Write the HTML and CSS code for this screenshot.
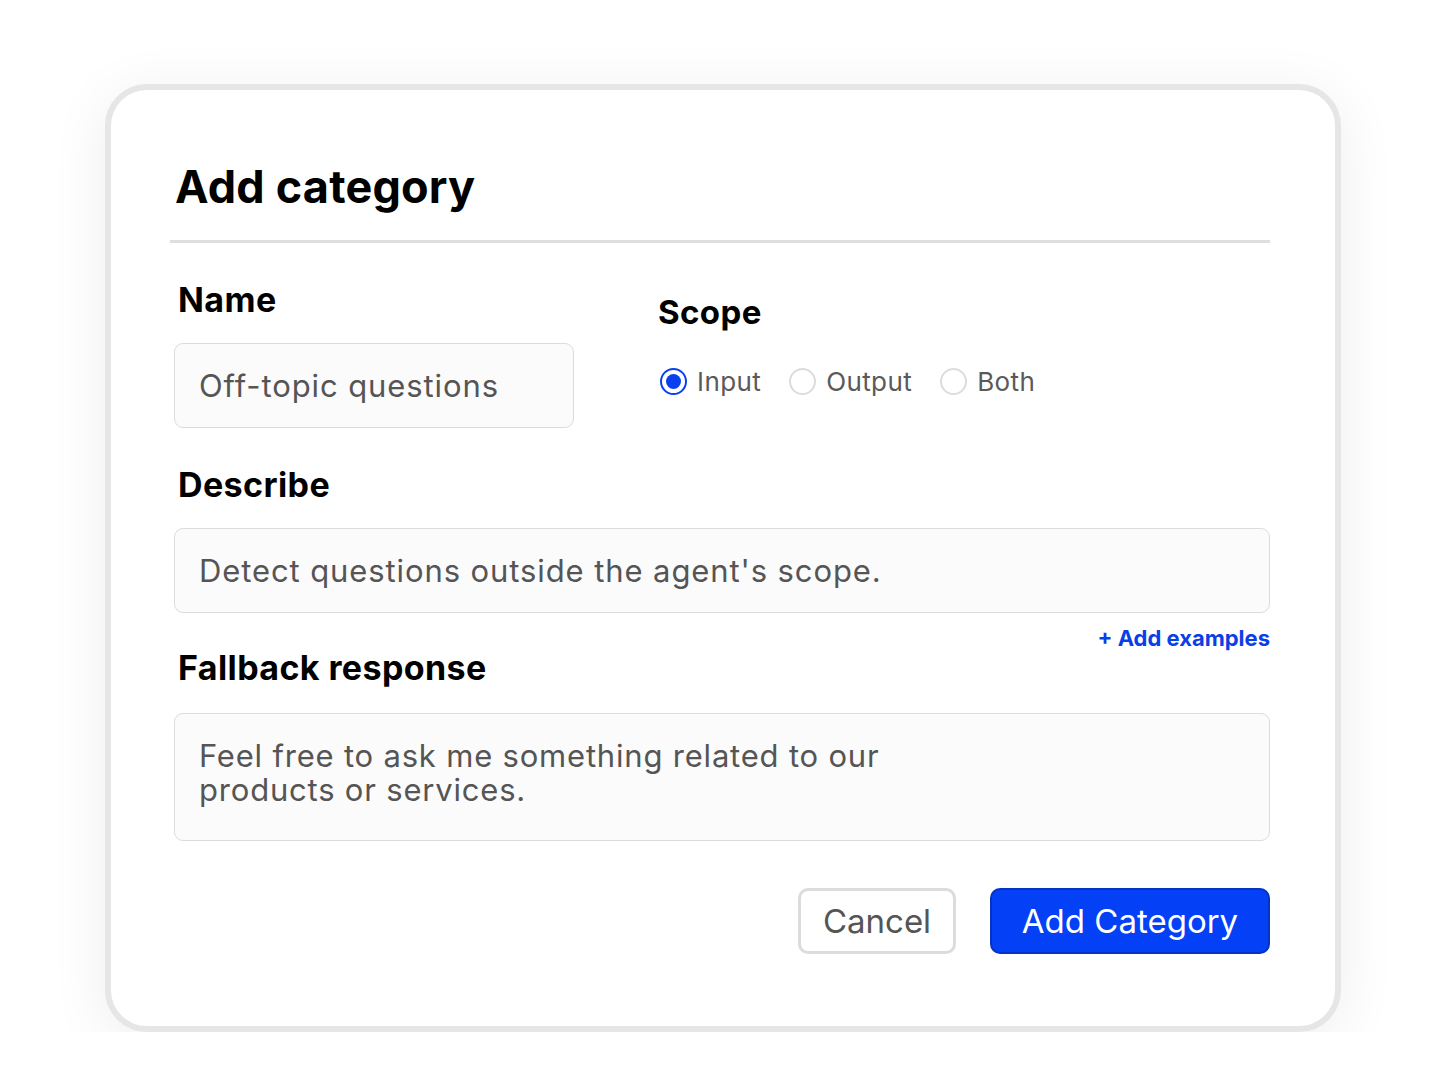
FILE: index.html
```html
<!DOCTYPE html>
<html lang="en">
<head>
    <meta charset="UTF-8">
    <meta name="viewport" content="width=device-width, initial-scale=1.0">
    <title>Add category</title>
    <link rel="stylesheet" href="styles.css">
</head>
<body>
    <div class="modal">
        <h1>Add category</h1>
        <hr class="divider">

        <div class="top-row">
            <div class="field">
                <label class="field-label" for="name">Name</label>
                <div class="input name-input" id="name">Off-topic questions</div>
            </div>
            <div class="field scope">
                <div class="field-label scope-label">Scope</div>
                <div class="radios">
                    <label class="radio checked"><span class="dot"></span>Input</label>
                    <label class="radio"><span class="dot"></span>Output</label>
                    <label class="radio"><span class="dot"></span>Both</label>
                </div>
            </div>
        </div>

        <div class="field">
            <label class="field-label" for="describe">Describe</label>
            <div class="input" id="describe">Detect questions outside the agent's scope.</div>
        </div>

        <div class="fallback-head">
            <label class="field-label" for="fallback">Fallback response</label>
            <a class="add-link" href="#">+ Add examples</a>
        </div>
        <div class="input textarea" id="fallback">Feel free to ask me something related to our<br>products or services.</div>

        <div class="actions">
            <button class="btn btn-cancel">Cancel</button>
            <button class="btn btn-primary">Add Category</button>
        </div>
    </div>
</body>
</html>
```

FILE: styles.css
```css
body {
    font-family: Inter, 'Liberation Sans', Arial, sans-serif;
    background-color: #ffffff;
    color: #111;
    margin: 0;
    padding: 0;
}
.modal {
    box-sizing: border-box;
    width: 1236px;
    margin: 84px auto 0;
    padding: 65px 65px 72px 63px;
    background: #ffffff;
    border: 6px solid #e6e6e6;
    border-radius: 42px;
    box-shadow: 0 10px 60px rgba(0, 0, 0, 0.07);
}
h1 {
    margin: 5px 0 26px;
    font-size: 45px;
    line-height: 54px;
    font-weight: 700;
    color: #000;
    padding-left: 1px;
    letter-spacing: 0.2px;
}
.divider {
    margin: 0 0 37px -4px;
    border: none;
    height: 3px;
    background: #dedede;
}
.top-row {
    display: grid;
    grid-template-columns: 400px 1fr;
    column-gap: 84px;
    margin-bottom: 37px;
}
.field-label {
    display: block;
    font-size: 34px;
    line-height: 40px;
    font-weight: 700;
    color: #000;
    padding-left: 4px;
    margin-bottom: 23px;
    letter-spacing: 0.4px;
}
.scope-label {
    font-size: 33px;
    margin-top: 12px;
    margin-bottom: 34px;
    padding-left: 0;
}
.input {
    box-sizing: border-box;
    display: flex;
    align-items: center;
    height: 85px;
    padding: 0 24px;
    border: 1px solid #dcdcdc;
    border-radius: 9px;
    background: #fbfbfc;
    font-size: 31px;
    letter-spacing: 0.9px;
    color: #555;
}
.radios {
    display: flex;
    align-items: center;
    gap: 28px;
    padding-left: 2px;
}
.radio {
    display: flex;
    align-items: center;
    gap: 10px;
    font-size: 26px;
    letter-spacing: 0.4px;
    color: #5a5a5a;
}
.dot {
    box-sizing: border-box;
    width: 27px;
    height: 27px;
    border-radius: 50%;
    border: 2px solid #dcdcdc;
    display: flex;
    align-items: center;
    justify-content: center;
}
.radio.checked .dot {
    border-color: #0a3ff0;
}
.radio.checked .dot::after {
    content: "";
    width: 15px;
    height: 15px;
    border-radius: 50%;
    background: #0a3ff0;
}
.fallback-head {
    display: flex;
    justify-content: space-between;
    align-items: flex-start;
    margin-top: 12px;
}
.fallback-head .field-label {
    margin-top: 23px;
    margin-bottom: 25px;
}
.add-link {
    font-size: 22px;
    line-height: 26px;
    font-weight: 700;
    color: #0a3ee6;
    text-decoration: none;
}
.textarea {
    height: 128px;
    align-items: flex-start;
    padding-top: 25px;
    line-height: 34px;
    letter-spacing: 0.8px;
}
.actions {
    display: flex;
    justify-content: flex-end;
    gap: 34px;
    margin-top: 47px;
}
.btn {
    box-sizing: border-box;
    height: 66px;
    font-family: inherit;
    font-size: 33px;
    border-radius: 10px;
    cursor: pointer;
}
.btn-cancel {
    width: 158px;
    background: #fff;
    border: 3px solid #dcdcdc;
    color: #555;
}
.btn-primary {
    width: 280px;
    background: #0440f5;
    border: 2px solid #0633c4;
    color: #fff;
}
```
